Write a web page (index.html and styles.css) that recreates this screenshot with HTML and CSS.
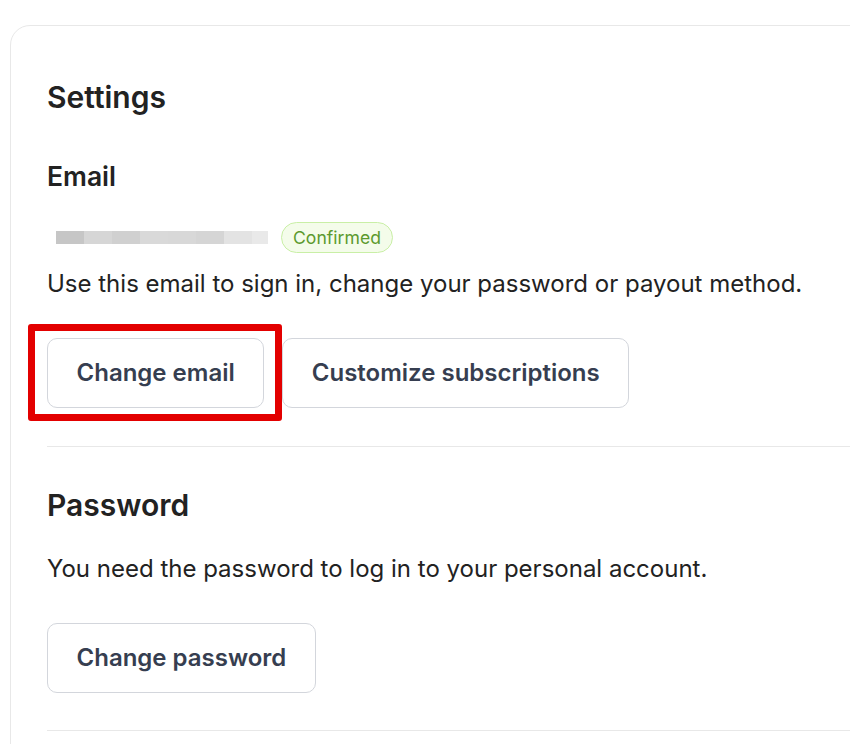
FILE: index.html
```html
<!DOCTYPE html>
<html lang="en">
<head>
<meta charset="utf-8">
<title>Settings</title>
<link rel="stylesheet" href="styles.css">
</head>
<body>
<div class="card">
  <h1 class="title">Settings</h1>

  <section class="section">
    <h2 class="subtitle">Email</h2>
    <div class="email-row">
      <span class="email-blur"></span>
      <span class="badge">Confirmed</span>
    </div>
    <p class="text">Use this email to sign in, change your password or payout method.</p>
    <div class="actions">
      <button class="btn highlighted">Change email<span class="mark"></span></button>
      <button class="btn">Customize subscriptions</button>
    </div>
  </section>

  <hr class="divider">

  <section class="section">
    <h2 class="heading">Password</h2>
    <p class="text text-pw">You need the password to log in to your personal account.</p>
    <div class="actions actions-pw">
      <button class="btn">Change password</button>
    </div>
  </section>

  <hr class="divider divider-last">
</div>
</body>
</html>
```

FILE: styles.css
```css
html, body {
  margin: 0;
  padding: 0;
  background: #ffffff;
  overflow: hidden;
}

body {
  font-family: Inter, "Noto Sans", "Liberation Sans", sans-serif;
  color: #222222;
  height: 744px;
}

.card {
  margin: 25px 0 0 10px;
  width: 900px;
  border: 1px solid #e8e8e8;
  border-radius: 20px;
  padding: 0 0 40px 36px;
  box-sizing: border-box;
}

.title {
  margin: 53px 0 0 0;
  font-size: 30px;
  line-height: 36px;
  font-weight: 600;
  color: #222222;
}

.subtitle {
  margin: 45px 0 0 0;
  font-size: 26.5px;
  line-height: 32px;
  font-weight: 600;
  color: #222222;
}

.heading {
  margin: 40px 0 0 0;
  font-size: 30px;
  line-height: 36px;
  font-weight: 600;
  color: #222222;
}

.email-row {
  display: flex;
  align-items: center;
  margin-top: 30px;
}

.email-blur {
  display: block;
  width: 212px;
  height: 13px;
  margin-left: 9px;
  background: linear-gradient(to right,
    #c6c6c6 0 28px,
    #d6d6d6 28px 56px,
    #d0d0d0 56px 84px,
    #d9d9d9 84px 112px,
    #d8d8d8 112px 140px,
    #d5d5d5 140px 168px,
    #e3e3e3 168px 196px,
    #e9e9e9 196px 212px);
}

.badge {
  display: inline-flex;
  align-items: center;
  box-sizing: border-box;
  height: 31px;
  margin-left: 13px;
  padding: 0 11px;
  border: 1px solid #c9efa6;
  border-radius: 16px;
  background: #f4fcea;
  color: #5c9a2f;
  font-size: 17.6px;
}

.text {
  margin: 17px 0 0 0;
  font-size: 24px;
  line-height: 28px;
  color: #222222;
}

.text-pw {
  margin-top: 32px;
}

.actions {
  display: flex;
  gap: 18px;
  margin-top: 40px;
}

.btn {
  position: relative;
  box-sizing: border-box;
  height: 70px;
  padding: 0 28.5px;
  border: 1px solid #d3d6dc;
  border-radius: 10px;
  background: #ffffff;
  color: #363e50;
  font-family: Inter, "Noto Sans", "Liberation Sans", sans-serif;
  font-size: 24px;
  font-weight: 600;
  line-height: 30px;
  cursor: pointer;
}

.mark {
  position: absolute;
  left: -20px;
  top: -15px;
  right: -19px;
  bottom: -14px;
  border: 7px solid #e30000;
  border-radius: 3px;
  pointer-events: none;
}

.divider {
  margin: 38px 0 0 0;
  border: none;
  border-top: 1px solid #e8e8e8;
  height: 0;
}

.divider-last {
  margin-top: 37px;
}
```
